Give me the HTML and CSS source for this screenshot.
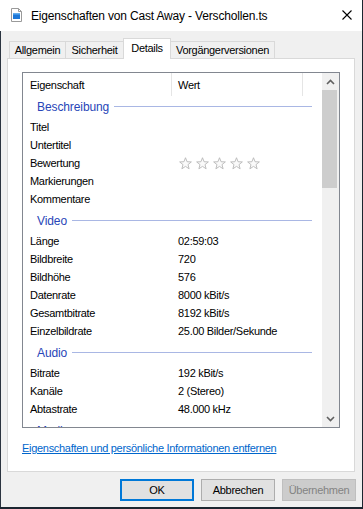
FILE: index.html
```html
<!DOCTYPE html>
<html lang="de">
<head>
  <meta charset="UTF-8" />
  <title>Eigenschaften von Cast Away - Verschollen.ts</title>
  <link rel="stylesheet" href="styles.css">
</head>
<body>
  <div class="window">
    <!-- Title bar -->
    <header class="titlebar">
      <svg class="file-icon" width="11" height="14" viewBox="0 0 11 14">
        <path d="M0.5 0.5 H7.5 L10.5 3.5 V13.5 H0.5 Z" fill="#fff" stroke="#9a9a9a"/>
        <path d="M7.5 0.5 V3.5 H10.5" fill="none" stroke="#9a9a9a"/>
        <rect x="2" y="5" width="7" height="6" fill="#1e78d8"/>
        <rect x="2" y="5" width="7" height="1.5" fill="#64aef0"/>
      </svg>
      <span class="title">Eigenschaften von Cast Away - Verschollen.ts</span>
      <svg class="close" width="10" height="10" viewBox="0 0 10 10">
        <path d="M0.5 0.5 L9.5 9.5 M9.5 0.5 L0.5 9.5" stroke="#000" stroke-width="1.1"/>
      </svg>
    </header>

    <div class="main">
      <div class="tabs">
        <div class="tab tab-allgemein">Allgemein</div>
        <div class="tab tab-sicherheit">Sicherheit</div>
        <div class="tab tab-details active">Details</div>
        <div class="tab tab-versionen">Vorgängerversionen</div>
      </div>

      <div class="panel">
        <div class="listbox">
          <div class="list">
            <div class="list-header">
              <div class="col-name">Eigenschaft</div>
              <div class="col-value">Wert</div>
            </div>

            <div class="group"><span>Beschreibung</span><i></i></div>
            <div class="row"><span>Titel</span><span></span></div>
            <div class="row"><span>Untertitel</span><span></span></div>
            <div class="row">
              <span>Bewertung</span>
              <span class="stars">
                <svg viewBox="0 0 14 14"><path d="M7 0.8 L8.7 5.1 L13.3 5.3 L9.7 8.2 L10.9 12.7 L7 10.1 L3.1 12.7 L4.3 8.2 L0.7 5.3 L5.3 5.1 Z"/></svg>
                <svg viewBox="0 0 14 14"><path d="M7 0.8 L8.7 5.1 L13.3 5.3 L9.7 8.2 L10.9 12.7 L7 10.1 L3.1 12.7 L4.3 8.2 L0.7 5.3 L5.3 5.1 Z"/></svg>
                <svg viewBox="0 0 14 14"><path d="M7 0.8 L8.7 5.1 L13.3 5.3 L9.7 8.2 L10.9 12.7 L7 10.1 L3.1 12.7 L4.3 8.2 L0.7 5.3 L5.3 5.1 Z"/></svg>
                <svg viewBox="0 0 14 14"><path d="M7 0.8 L8.7 5.1 L13.3 5.3 L9.7 8.2 L10.9 12.7 L7 10.1 L3.1 12.7 L4.3 8.2 L0.7 5.3 L5.3 5.1 Z"/></svg>
                <svg viewBox="0 0 14 14"><path d="M7 0.8 L8.7 5.1 L13.3 5.3 L9.7 8.2 L10.9 12.7 L7 10.1 L3.1 12.7 L4.3 8.2 L0.7 5.3 L5.3 5.1 Z"/></svg>
              </span>
            </div>
            <div class="row"><span>Markierungen</span><span></span></div>
            <div class="row"><span>Kommentare</span><span></span></div>

            <div class="group"><span>Video</span><i></i></div>
            <div class="row"><span>Länge</span><span>02:59:03</span></div>
            <div class="row"><span>Bildbreite</span><span>720</span></div>
            <div class="row"><span>Bildhöhe</span><span>576</span></div>
            <div class="row"><span>Datenrate</span><span>8000 kBit/s</span></div>
            <div class="row"><span>Gesamtbitrate</span><span>8192 kBit/s</span></div>
            <div class="row"><span>Einzelbildrate</span><span>25.00 Bilder/Sekunde</span></div>

            <div class="group"><span>Audio</span><i></i></div>
            <div class="row"><span>Bitrate</span><span>192 kBit/s</span></div>
            <div class="row"><span>Kanäle</span><span>2 (Stereo)</span></div>
            <div class="row"><span>Abtastrate</span><span>48.000 kHz</span></div>

            <div class="group"><span>Medien</span><i></i></div>
          </div>

          <div class="scrollbar">
            <div class="scroll-btn">
              <svg width="9" height="6" viewBox="0 0 9 6"><path d="M1 5 L4.5 1.5 L8 5" fill="none" stroke="#606060" stroke-width="1.6"/></svg>
            </div>
            <div class="thumb"></div>
            <div class="track"></div>
            <div class="scroll-btn">
              <svg width="9" height="6" viewBox="0 0 9 6"><path d="M1 1 L4.5 4.5 L8 1" fill="none" stroke="#606060" stroke-width="1.6"/></svg>
            </div>
          </div>
        </div>

        <a class="remove-link" href="#">Eigenschaften und persönliche Informationen entfernen</a>
      </div>

      <div class="buttons">
        <button class="btn btn-default">OK</button>
        <button class="btn">Abbrechen</button>
        <button class="btn" disabled>Übernehmen</button>
      </div>
    </div>
  </div>
</body>
</html>
```
FILE: styles.css
```css
/* Base */
html, body {
  margin: 0;
  padding: 0;
  background: #1c2630;
}

body {
  font-family: "Liberation Sans", Arial, sans-serif;
  font-size: 11px;
  letter-spacing: -0.3px;
  color: #000;
}

.window {
  width: 362px;
  height: 507px;
  display: flex;
  flex-direction: column;
  background: #f0f0f0;
}

/* Title bar */
.titlebar {
  height: 31px;
  flex: none;
  background: #fff;
  display: flex;
  align-items: center;
}

.file-icon {
  margin-left: 11px;
  margin-top: -1px;
}

.title {
  margin-left: 9px;
  font-size: 12px;
  letter-spacing: -0.17px;
  flex: 1;
}

.close {
  margin-right: 10px;
  margin-top: -2px;
}

/* Dialog body */
.main {
  flex: 1;
  border-left: 1px solid #2b3440;
  padding: 7px 7px 0 6px;
  display: flex;
  flex-direction: column;
}

/* Tabs */
.tabs {
  display: flex;
  align-items: flex-end;
  height: 20px;
  padding-left: 2px;
}

.tab {
  box-sizing: border-box;
  height: 17px;
  border: 1px solid #d9d9d9;
  border-bottom: none;
  background: #f0f0f0;
  text-align: center;
  line-height: 15px;
  padding-top: 1px;
  margin-left: -1px;
}

.tab-allgemein { width: 57px; margin-left: 0; }
.tab-sicherheit { width: 59px; }
.tab-details { width: 48px; }
.tab-versionen { width: 105px; }

.tab.active {
  height: 21px;
  padding-top: 2px;
  background: #fff;
  margin-bottom: -1px;
  position: relative;
  z-index: 1;
}

/* Panel */
.panel {
  box-sizing: border-box;
  height: 414px;
  background: #fff;
  border: 1px solid #d9d9d9;
  padding: 13px 14px 0 14px;
}

.listbox {
  box-sizing: border-box;
  height: 356px;
  border: 1px solid #828790;
  display: flex;
}

.list {
  flex: 1;
  overflow: hidden;
}

.list-header {
  height: 21px;
  display: flex;
}

.list-header div {
  box-sizing: border-box;
  height: 23px;
  padding-top: 5px;
  line-height: 15px;
  border-right: 1px solid #e5e5e5;
}

.col-name {
  width: 149px;
  padding-left: 7px;
}

.col-value {
  width: 131px;
  padding-left: 6px;
}

.group {
  height: 24px;
  display: flex;
  align-items: center;
  padding: 1px 10px 0 14px;
  box-sizing: border-box;
  color: #2846b8;
  font-size: 12px;
  letter-spacing: -0.1px;
}

.group i {
  flex: 1;
  height: 0;
  border-top: 1px solid #a9b7e4;
  margin-left: 5px;
  margin-top: -1px;
}

.row {
  height: 18px;
  line-height: 18px;
  display: grid;
  grid-template-columns: 148px 1fr;
  padding-left: 7px;
}

.stars {
  display: flex;
  align-items: center;
  gap: 4px;
  padding-left: 1px;
}

.stars svg {
  width: 13px;
  height: 13px;
  fill: #fafafa;
  stroke: #b9b9b9;
  stroke-width: 1;
}

/* Scrollbar */
.scrollbar {
  width: 17px;
  background: #f0f0f0;
  display: flex;
  flex-direction: column;
}

.scroll-btn {
  height: 17px;
  display: flex;
  align-items: center;
  justify-content: center;
}

.thumb {
  height: 98px;
  margin: 0 2px 0 0;
  background: #cdcdcd;
}

.track {
  flex: 1;
}

/* Link */
.remove-link {
  display: block;
  margin-top: 13px;
  line-height: 14px;
  color: #0066cc;
  text-decoration: underline;
}

/* Buttons */
.buttons {
  display: flex;
  justify-content: flex-end;
  gap: 7px;
  margin-top: 7px;
  margin-right: -1px;
}

.btn {
  box-sizing: border-box;
  width: 74px;
  height: 22px;
  padding: 0;
  background: #e1e1e1;
  border: 1px solid #adadad;
  font-family: "Liberation Sans", Arial, sans-serif;
  font-size: 11px;
  letter-spacing: -0.3px;
  color: #000;
}

.btn-default {
  border: 2px solid #0078d7;
}

.btn:disabled {
  background: #cccccc;
  border-color: #bfbfbf;
  color: #838383;
}
```
